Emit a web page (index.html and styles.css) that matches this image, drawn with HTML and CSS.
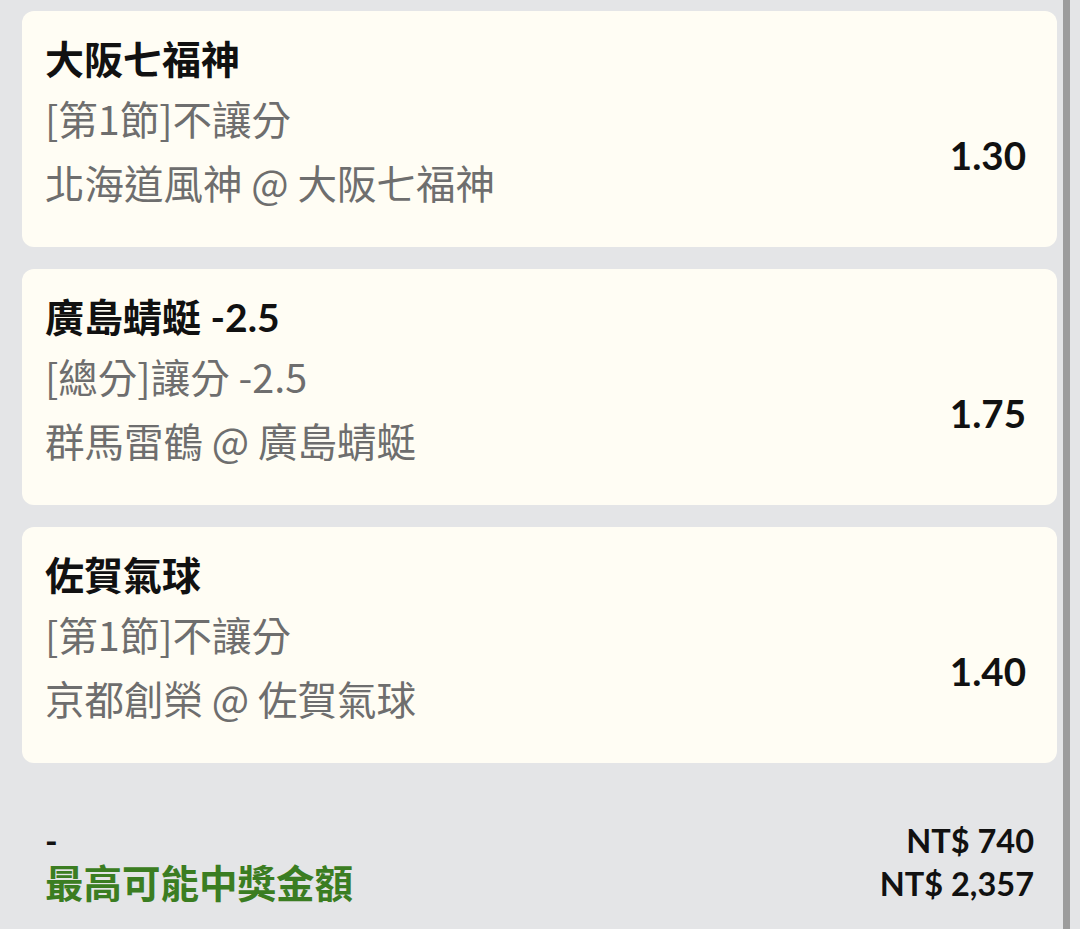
FILE: index.html
```html
<!DOCTYPE html>
<html lang="zh-Hant">
<head>
    <meta charset="UTF-8">
    <meta name="viewport" content="width=device-width, initial-scale=1.0">
    <title>投注單</title>
    <link rel="stylesheet" href="styles.css">
</head>
<body>

    <div class="bet-list">
        <div class="bet-card">
            <p class="bet-pick">大阪七福神</p>
            <p class="bet-market">[第1節]不讓分</p>
            <p class="bet-match">北海道風神 @ 大阪七福神</p>
            <p class="bet-odds">1.30</p>
        </div>

        <div class="bet-card">
            <p class="bet-pick">廣島蜻蜓 -2.5</p>
            <p class="bet-market">[總分]讓分 -2.5</p>
            <p class="bet-match">群馬雷鶴 @ 廣島蜻蜓</p>
            <p class="bet-odds">1.75</p>
        </div>

        <div class="bet-card">
            <p class="bet-pick">佐賀氣球</p>
            <p class="bet-market">[第1節]不讓分</p>
            <p class="bet-match">京都創榮 @ 佐賀氣球</p>
            <p class="bet-odds">1.40</p>
        </div>
    </div>

    <div class="bet-summary">
        <div class="summary-labels">
            <p class="summary-dash">-</p>
            <p class="summary-win">最高可能中獎金額</p>
        </div>
        <div class="summary-amounts">
            <p>NT$ 740</p>
            <p>NT$ 2,357</p>
        </div>
    </div>

    <div class="scroll-bar"></div>

</body>
</html>
```

FILE: styles.css
```css
body {
    margin: 0;
    background-color: #e4e5e7;
    font-family: 'Lato', 'Noto Sans CJK TC', sans-serif;
    color: #111;
}
p {
    margin: 0;
}
.bet-list {
    display: flex;
    flex-direction: column;
    gap: 22px;
    padding: 11px 23px 0 22px;
}
.bet-card {
    display: grid;
    grid-template-columns: 1fr auto;
    align-content: start;
    height: 236px;
    box-sizing: border-box;
    padding: 21px 31px 0 23px;
    background-color: #fffdf4;
    border-radius: 12px;
}
.bet-pick {
    grid-column: 1 / 3;
    font-size: 39px;
    line-height: 54px;
    font-weight: bold;
    color: #111;
}
.bet-market,
.bet-match {
    grid-column: 1;
    font-family: 'Noto Sans CJK TC', sans-serif;
    font-size: 39.5px;
    line-height: 64px;
    color: #6e6e6e;
}
.bet-odds {
    grid-column: 2;
    grid-row: 2 / 4;
    align-self: center;
    padding-top: 10px;
    font-size: 38.5px;
    font-weight: bold;
    color: #111;
}
.bet-summary {
    display: flex;
    justify-content: space-between;
    align-items: flex-end;
    padding: 56px 46px 0 45px;
}
.summary-dash {
    font-size: 34px;
    line-height: 43px;
    font-weight: bold;
}
.summary-win {
    font-size: 38.5px;
    line-height: 43px;
    font-weight: bold;
    color: #3b7d22;
}
.summary-amounts {
    text-align: right;
    font-size: 32.5px;
    line-height: 43px;
    font-weight: bold;
}
.scroll-bar {
    position: fixed;
    top: 0;
    bottom: 0;
    left: 1063px;
    width: 7px;
    background-color: #9c9c9c;
}
```
